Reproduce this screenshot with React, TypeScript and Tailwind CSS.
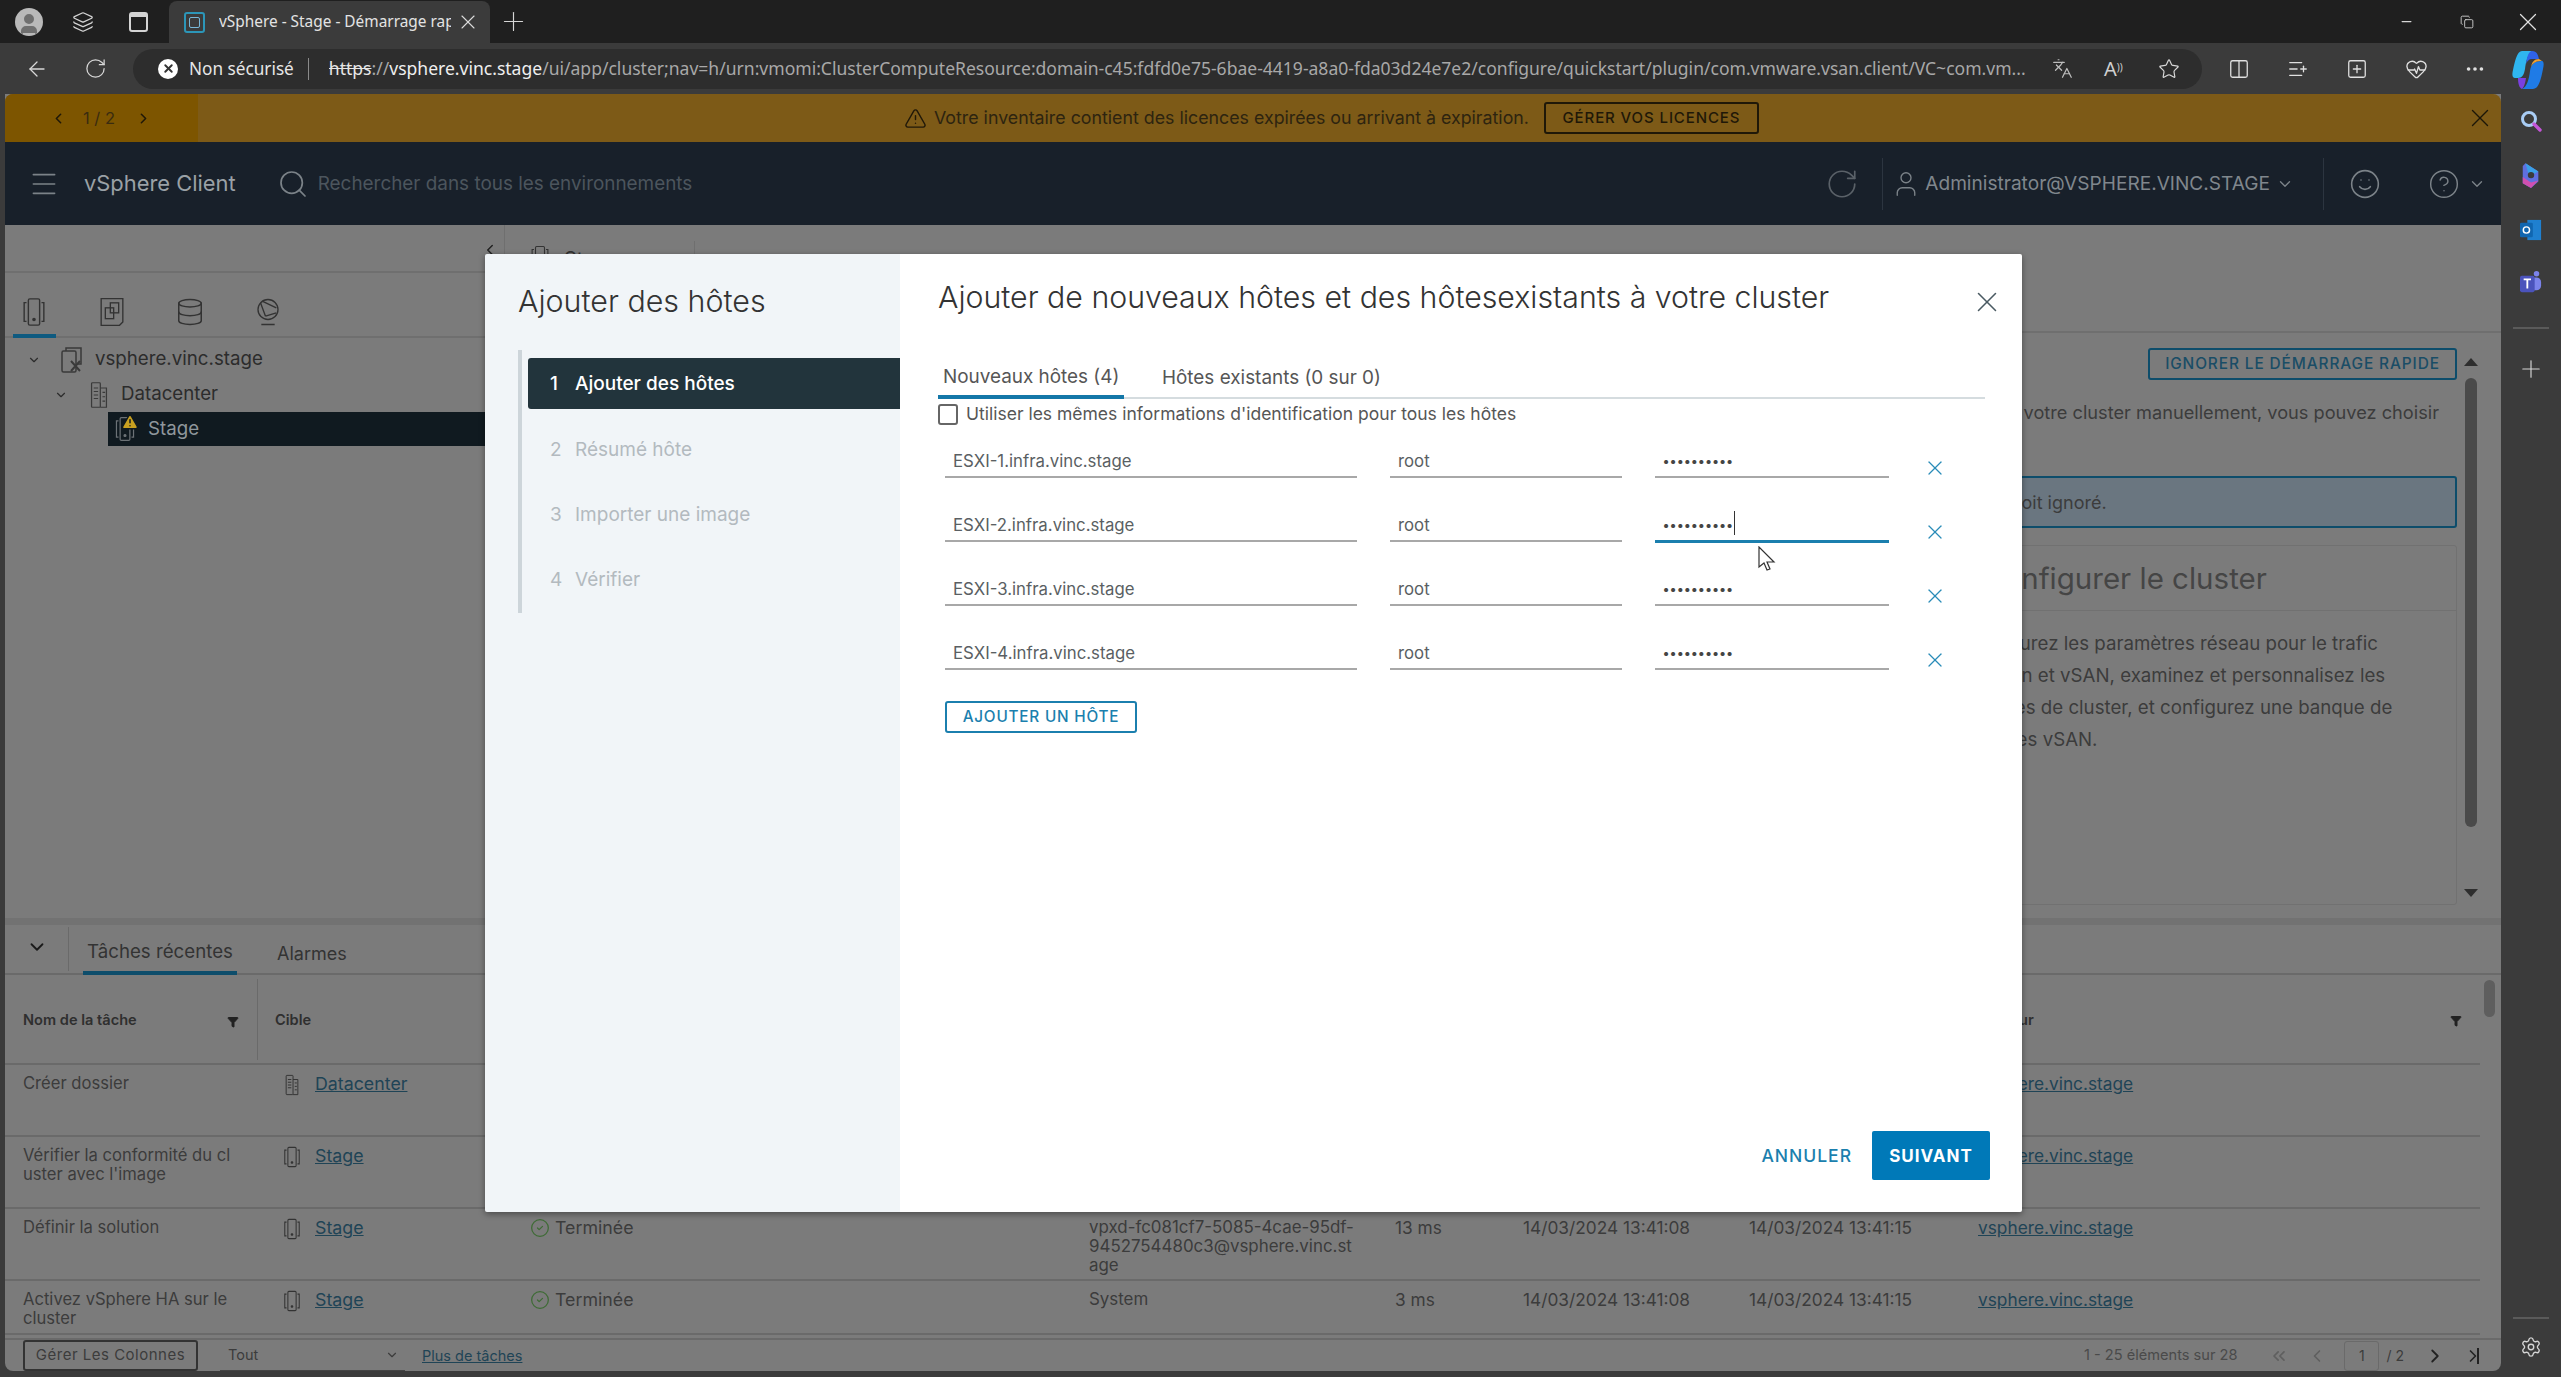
import React from "react";
import {
  ArrowLeft, RotateCw, X, Plus, Minus, Copy, Star, Columns2, ListPlus, HeartPulse, MoreHorizontal, Search,
  Menu, User, Smile, CircleHelp, ChevronDown, ChevronLeft, ChevronRight, TriangleAlert, Database,
  Settings, Filter, CircleCheck, ChevronsLeft, Languages, Layers, SquarePlus,
} from "lucide-react";

const inter = "font-['Inter','Liberation_Sans',sans-serif]";
const seg = "font-['Noto_Sans','Liberation_Sans',sans-serif]";

function ClusterIcon({ className = "" }: { className?: string }) {
  return (
    <svg viewBox="0 0 24 32" fill="none" stroke="currentColor" strokeWidth="1.5" className={className}>
      <rect x="6" y="2" width="12" height="28" rx="1.5" />
      <path d="M4 6H1.5v20H4M20 6h2.5v20H20" />
      <circle cx="12" cy="24" r="1.2" fill="currentColor" />
    </svg>
  );
}
function VCenterIcon({ className = "" }: { className?: string }) {
  return (
    <svg viewBox="0 0 24 28" fill="none" stroke="currentColor" strokeWidth="1.5" className={className}>
      <rect x="2" y="5" width="14" height="21" rx="1.5" />
      <path d="M6 5V2h15v16h-4" />
      <path d="M11 15l9 10M20 15l-9 10" strokeWidth="2" />
    </svg>
  );
}
function DcIcon({ className = "" }: { className?: string }) {
  return (
    <svg viewBox="0 0 20 32" fill="none" stroke="currentColor" strokeWidth="1.4" className={className}>
      <rect x="1.5" y="2" width="10" height="28" rx="1" />
      <path d="M11.5 8h7v22h-7M4 8h5M4 12h5M4 16h5M4 20h5M14 13h3M14 18h3M14 23h3" />
    </svg>
  );
}
function VmsIcon({ className = "" }: { className?: string }) {
  return (
    <svg viewBox="0 0 30 36" fill="none" stroke="currentColor" strokeWidth="1.6" className={className}>
      <path d="M2 2h26v28l-4 4H2z" />
      <rect x="13" y="7" width="10" height="12" />
      <rect x="7" y="13" width="10" height="13" />
    </svg>
  );
}
function NetIcon({ className = "" }: { className?: string }) {
  return (
    <svg viewBox="0 0 28 36" fill="none" stroke="currentColor" strokeWidth="1.6" className={className}>
      <circle cx="14" cy="15" r="12" />
      <path d="M5 7l6 16M11 23l13-4M7 5l17 8M10 33h9M6 33h16" />
    </svg>
  );
}
function CopilotLogo() {
  return (
    <svg viewBox="0 0 32 42" className="w-[32px] h-[42px]">
      <path d="M10 3h10c-4 3-6 10-7 18-1 6-3 9-7 9H3C0 30 0 26 1 22 3 13 5 3 10 3z" fill="#2fb6f0" />
      <path d="M20 3c5 0 6 4 7 8l-7 0c-3 0-5 2-6 5 1-8 3-13 6-13z" fill="#2f62e8" />
      <path d="M30 13c2 0 2 4 1 8-2 10-4 20-10 20H10c5-2 7-10 8-18 1-6 3-10 12-10z" fill="#1f7be6" />
      <path d="M6 30h8c-1 6-2 9-4 11-3-1-4-6-4-11z" fill="#7a3fe0" />
      <path d="M27 11l3 2c-5 0-9 1-11 6 1-5 3-8 8-8z" fill="#f0a030" />
    </svg>
  );
}
function EdgeSidebar() {
  return (
    <div className="w-[60px] flex flex-col items-center">
      <svg viewBox="0 0 22 22" fill="none" className="w-[22px] h-[22px] mt-[16px]">
        <circle cx="9" cy="9" r="6.5" stroke="#a9cdf5" strokeWidth="3" />
        <path d="M14 14l6 6" stroke="#c455d8" strokeWidth="3.4" strokeLinecap="round" />
      </svg>
      <svg viewBox="0 0 24 30" className="w-[22px] h-[28px] mt-[30px]">
        <path d="M6 1l14 9v11l-8 7-9-5V4z" fill="#5f6fe0" />
        <path d="M6 1l14 9-7 4-4-2z" fill="#3aa0e8" />
        <path d="M3 16l9 6 8-2-8 8-9-5z" fill="#d050b0" />
        <circle cx="12" cy="14" r="3.5" fill="#3b3b3b" />
      </svg>
      <svg viewBox="0 0 24 26" className="w-[22px] h-[24px] mt-[28px]">
        <rect x="8" y="2" width="15" height="22" fill="#1f80d0" />
        <rect x="0" y="5" width="14" height="16" rx="1.5" fill="#1066b0" />
        <circle cx="7" cy="13" r="3.4" fill="none" stroke="#fff" strokeWidth="1.6" />
      </svg>
      <svg viewBox="0 0 24 28" className="w-[22px] h-[26px] mt-[28px]">
        <circle cx="18" cy="4" r="3" fill="#7b83eb" />
        <rect x="11" y="8" width="12" height="14" rx="5" fill="#7b83eb" />
        <rect x="0" y="6" width="16" height="18" rx="2" fill="#4b53bc" />
        <path d="M4 10h8M8 10v10" stroke="#fff" strokeWidth="2" />
      </svg>
      <div className="w-[36px] h-[2px] bg-[#5a5a5a] mt-[31px]" />
      <Plus className="w-[28px] h-[28px] text-[#d6d6d6] mt-[26px]" strokeWidth={1} />
      <div className="flex-1" />
      <div className="w-[36px] h-[2px] bg-[#5a5a5a]" />
      <Settings className="w-[22px] h-[22px] text-[#d6d6d6] mt-[17px] mb-[19px]" strokeWidth={1.5} />
    </div>
  );
}

function BrowserChrome() {
  return (
    <>
      <div className={`h-[43px] bg-[#1f1f1f] flex items-center ${seg}`}>
        <div className="w-[28px] h-[28px] rounded-full bg-[#b9b9b9] ml-[15px] flex items-end justify-center overflow-hidden shrink-0">
          <User className="w-[24px] h-[24px] text-[#6f6f6f]" fill="#6f6f6f" />
        </div>
        <Layers className="w-[22px] h-[22px] text-[#d4d4d4] ml-[29px]" strokeWidth={1.4} />
        <div className="w-[19px] h-[20px] border-2 border-[#d4d4d4] border-t-[5px] rounded-[3px] ml-[35px]" />
        <div className="w-[321px] h-[43px] mt-[1px] ml-[21px] bg-[#3b3b3b] rounded-t-[8px] flex items-center pl-[15px]">
          <div className="w-[21px] h-[21px] rounded-[3px] border-2 border-[#2c96b8] flex items-center justify-center shrink-0">
            <div className="w-[11px] h-[11px] border border-[#79b8d8] rounded-[2px]" />
          </div>
          <span className="ml-[14px] text-[15.4px] text-[#e3e3e3] w-[232px] overflow-hidden whitespace-nowrap shrink-0">vSphere - Stage - Démarrage rapide</span>
          <X className="w-[24px] h-[24px] text-[#dcdcdc] ml-[5px] shrink-0" strokeWidth={1.1} />
        </div>
        <Plus className="w-[31px] h-[31px] text-[#d6d6d6] ml-[8px]" strokeWidth={0.9} />
        <div className="flex-1" />
        <Minus className="w-[15px] h-[15px] text-[#d6d6d6] mr-[46px]" strokeWidth={2} />
        <Copy className="w-[14px] h-[14px] text-[#d6d6d6] mr-[39px]" strokeWidth={1.5} />
        <X className="w-[30px] h-[30px] text-[#e0e0e0] mr-[18px]" strokeWidth={1} />
      </div>
      <div className={`h-[51px] bg-[#3b3b3b] flex items-center ${seg}`}>
        <ArrowLeft className="w-[24px] h-[24px] text-[#d8d8d8] ml-[25px]" strokeWidth={1.3} />
        <RotateCw className="w-[23px] h-[23px] text-[#d8d8d8] ml-[35px]" strokeWidth={1.3} />
        <div className="ml-[26px] w-[2069px] h-[40px] rounded-full bg-[#2d2d2d] flex items-center pl-[25px] pr-[22px]">
          <div className="w-[20px] h-[20px] rounded-full bg-white flex items-center justify-center shrink-0">
            <X className="w-[13px] h-[13px] text-[#333]" strokeWidth={3.5} />
          </div>
          <span className="ml-[11px] text-[17.2px] text-[#e6e6e6] whitespace-nowrap shrink-0">Non sécurisé</span>
          <div className="w-px h-[22px] bg-[#8a8a8a] ml-[14px] mr-[20px] shrink-0" />
          <div className="flex-1 min-w-0 overflow-hidden whitespace-nowrap text-[17.55px] text-[#a8a8a8]">
            <span className="text-[#e6e6e6] line-through">https</span>://<span className="text-[#efefef]">vsphere.vinc.stage</span>/ui/app/cluster;nav=h/urn:vmomi:ClusterComputeResource:domain-c45:fdfd0e75-6bae-4419-a8a0-fda03d24e7e2/configure/quickstart/plugin/com.vmware.vsan.client/VC~com.vm...
          </div>
          <Languages className="w-[21px] h-[21px] text-[#bdbdbd] ml-[16px] shrink-0" strokeWidth={1.4} />
          <span className="ml-[31px] text-[20px] text-[#d0d0d0] shrink-0 leading-none w-[22px]">A<sup className="text-[10px]">))</sup></span>
          <Star className="w-[22px] h-[22px] text-[#d8d8d8] ml-[32px] shrink-0" strokeWidth={1.3} />
        </div>
        <Columns2 className="w-[22px] h-[24px] text-[#e0e0e0] ml-[26px]" strokeWidth={1.4} />
        <ListPlus className="w-[22px] h-[24px] text-[#e0e0e0] ml-[37px]" strokeWidth={1.4} />
        <SquarePlus className="w-[22px] h-[24px] text-[#e0e0e0] ml-[37px]" strokeWidth={1.4} />
        <HeartPulse className="w-[23px] h-[24px] text-[#e0e0e0] ml-[37px]" strokeWidth={1.4} />
        <MoreHorizontal className="w-[22px] h-[22px] text-[#e0e0e0] ml-[36px]" strokeWidth={2} />
        <div className="ml-[26px]"><CopilotLogo /></div>
      </div>
    </>
  );
}

function Banner() {
  return (
    <div className={`h-[48px] bg-[#7d5a17] flex items-center rounded-tl-[8px] rounded-tr-[8px] overflow-hidden shrink-0 ${inter}`}>
      <div className="w-[193px] h-full bg-[#7d5500] flex items-center pl-[45px] text-[#1f1808] shrink-0">
        <ChevronLeft className="w-[17px] h-[17px]" strokeWidth={2.2} />
        <span className="ml-[16px] w-[34px] text-[16.5px] text-[#3a2c10] whitespace-nowrap">1 / 2</span>
        <ChevronRight className="w-[17px] h-[17px] ml-[18px]" strokeWidth={2.2} />
      </div>
      <div className="flex-1 flex items-center pl-[706px]">
        <TriangleAlert className="w-[23px] h-[23px] text-[#201808]" strokeWidth={1.5} />
        <span className="ml-[7px] text-[17.8px] text-[#2d2410] whitespace-nowrap">Votre inventaire contient des licences expirées ou arrivant à expiration.</span>
        <div className="ml-[15px] w-[215px] h-[32px] rounded-[3px] border-2 border-[#1f1808] flex items-center justify-center text-[15px] tracking-[0.9px] font-medium text-[#1f1808] whitespace-nowrap">GÉRER VOS LICENCES</div>
      </div>
      <X className="w-[30px] h-[30px] text-[#1c1608] mr-[6px]" strokeWidth={1.1} />
    </div>
  );
}

function AppHeader() {
  return (
    <div className={`h-[83px] bg-[#18202a] flex items-center text-[#7b8288] shrink-0 ${inter}`}>
      <Menu className="w-[32px] h-[32px] ml-[23px]" strokeWidth={1.2} />
      <span className="ml-[24px] text-[21.9px] text-[#9aa1a6] whitespace-nowrap">vSphere Client</span>
      <Search className="w-[32px] h-[32px] ml-[41px]" strokeWidth={1.3} />
      <span className="ml-[9px] pt-[2px] text-[18.9px] text-[#4c555d] whitespace-nowrap">Rechercher dans tous les environnements</span>
      <div className="flex-1" />
      <RotateCw className="w-[34px] h-[34px] text-[#5a6168]" strokeWidth={1.2} />
      <div className="w-px h-[52px] bg-[#2c3540] ml-[23px]" />
      <User className="w-[30px] h-[34px] ml-[8px]" strokeWidth={1.1} />
      <span className="ml-[4px] text-[19.1px] text-[#80878d] whitespace-nowrap">Administrator@VSPHERE.VINC.STAGE</span>
      <ChevronDown className="w-[18px] h-[18px] ml-[6px]" strokeWidth={1.8} />
      <div className="w-px h-[52px] bg-[#2c3540] ml-[29px]" />
      <Smile className="w-[32px] h-[32px] ml-[25px]" strokeWidth={1.2} />
      <CircleHelp className="w-[32px] h-[32px] ml-[47px]" strokeWidth={1.1} />
      <ChevronDown className="w-[18px] h-[18px] ml-[8px] mr-[15px]" strokeWidth={1.8} />
    </div>
  );
}

function LeftPanel() {
  return (
    <div className={`w-[500px] border-r border-[#6f6f6f] flex flex-col ${inter}`}>
      <div className="h-[48px] border-b-2 border-[#6f6f6f] flex justify-end items-start pr-[5px] pt-[16px]">
        <ChevronLeft className="w-[18px] h-[18px] text-[#222]" strokeWidth={2} />
      </div>
      <div className="h-[65px] border-b-2 border-[#6f6f6f] flex items-start pl-[14px] pt-[24px] gap-[48px] text-[#333]">
        <div className="relative h-[41px]">
          <ClusterIcon className="w-[30px] h-[30px]" />
          <div className="absolute left-[-6px] right-[-7px] bottom-0 h-[4px] bg-[#0e5a80]" />
        </div>
        <VmsIcon className="w-[30px] h-[30px]" />
        <Database className="w-[30px] h-[30px]" strokeWidth={1.2} />
        <NetIcon className="w-[30px] h-[30px]" />
      </div>
      <div className="pt-[4px] text-[18.7px] text-[#2c2c2c]">
        <div className="h-[35px] flex items-center">
          <ChevronDown className="w-[14px] h-[14px] ml-[22px]" />
          <VCenterIcon className="w-[24px] h-[28px] ml-[19px] text-[#3a3a3a]" />
          <span className="ml-[11px]">vsphere.vinc.stage</span>
        </div>
        <div className="h-[35px] flex items-center">
          <ChevronDown className="w-[14px] h-[14px] ml-[49px]" />
          <DcIcon className="w-[20px] h-[28px] ml-[21px] text-[#3a3a3a]" />
          <span className="ml-[12px]">Datacenter</span>
        </div>
        <div className="h-[34px] flex items-center ml-[103px] bg-[#101a20] text-[#8f979c]">
          <div className="relative ml-[7px]">
            <ClusterIcon className="w-[20px] h-[26px] text-[#6c7276]" />
            <TriangleAlert className="absolute top-[-3px] left-[6px] w-[18px] h-[18px] text-[#c8a020]" fill="#c8a020" stroke="#101a20" />
          </div>
          <span className="ml-[13px]">Stage</span>
        </div>
      </div>
    </div>
  );
}

function QuickStart() {
  return (
    <div className={`flex-1 flex flex-col min-w-0 ${inter}`}>
      <div className="h-[108px] shrink-0 border-b-2 border-[#6f6f6f] pl-[25px] pt-[22px] text-[#333] text-[20px] flex items-start">
        <ClusterIcon className="w-[20px] h-[24px] -mt-[2px]" />
        <span className="ml-[14px] leading-[24px]">Stage</span>
        <div className="w-px h-[30px] bg-[#6f6f6f] ml-[75px] -mt-[6px]" />
      </div>
      <div className="flex-1 flex justify-end min-h-0">
        <div className="flex flex-col items-end">
          <div className="mt-[15px] w-[309px] h-[32px] rounded-[3px] border-2 border-[#0d4d6b] flex items-center justify-center text-[15.4px] tracking-[0.9px] font-medium text-[#1a4d66] whitespace-nowrap">IGNORER LE DÉMARRAGE RAPIDE</div>
          <p className="mt-[20px] mr-[18px] text-[18.2px] leading-[24px] text-[#3c3c3c] whitespace-nowrap">votre cluster manuellement, vous pouvez choisir</p>
          <div className="mt-[52px] w-[520px] h-[52px] bg-[#6a7680] border-2 border-[#0d4d6b] rounded-[3px] flex items-center pl-[73px] text-[18px] text-[#3c3c3c]">soit ignoré.</div>
          <div className="mt-[17px] w-[520px] h-[360px] border border-[#717171] rounded-[3px] flex flex-col">
            <div className="h-[65px] border-b border-[#717171] flex items-center pl-[44px] text-[29.5px] text-[#454545] whitespace-nowrap">Configurer le cluster</div>
            <div className="pl-[23px] pt-[17px] text-[18.7px] leading-[32px] text-[#3c3c3c] whitespace-nowrap">
              <div>Configurez les paramètres réseau pour le trafic</div>
              <div>vMotion et vSAN, examinez et personnalisez les</div>
              <div>services de cluster, et configurez une banque de</div>
              <div>données vSAN.</div>
            </div>
          </div>
        </div>
        <div className="w-[44px] pl-[6px] pt-[25px] flex flex-col items-start">
          <div className="w-0 h-0 border-x-[7px] border-x-transparent border-b-[8px] border-b-[#2e2e2e] ml-[1px]" />
          <div className="w-[12px] h-[449px] bg-[#4a4a4a] rounded-full mt-[12px] ml-[2px]" />
          <div className="w-0 h-0 border-x-[7px] border-x-transparent border-t-[8px] border-t-[#2e2e2e] mt-[62px] ml-[1px]" />
        </div>
      </div>
    </div>
  );
}

const vpxd = "vpxd-fc081cf7-5085-4cae-95df-\n9452754480c3@vsphere.vinc.st\nage";
const taskRows = [
  { name: "Créer dossier", dc: true, target: "Datacenter", init: vpxd, q: "13 ms", h: "h-[72px]" },
  { name: "Vérifier la conformité du cl\nuster avec l'image", dc: false, target: "Stage", init: vpxd, q: "13 ms", h: "h-[72px]" },
  { name: "Définir la solution", dc: false, target: "Stage", init: vpxd, q: "13 ms", h: "h-[72px]" },
  { name: "Activez vSphere HA sur le\ncluster", dc: false, target: "Stage", init: "System", q: "3 ms", h: "h-[54px]" },
];

const cols = "grid grid-cols-[253px_254px_577px_306px_128px_226px_229px_1fr]";

function Tasks() {
  return (
    <div className={`flex-1 flex flex-col min-h-0 ${inter}`}>
      <div className="h-[7px] bg-[#727272] shrink-0" />
      <div className="h-[50px] border-b-2 border-[#6a6a6a] flex items-stretch shrink-0">
        <div className="w-[64px] border-r border-[#6a6a6a] my-[2px] flex items-center justify-center">
          <ChevronDown className="w-[22px] h-[22px] text-[#1a1a1a] -mt-[4px]" strokeWidth={2} />
        </div>
        <div className="ml-[14px] w-[154px] border-b-4 border-[#0d4d6b] -mb-[2px] flex items-center justify-center pt-[9px] text-[18.7px] text-[#333] whitespace-nowrap">Tâches récentes</div>
        <div className="ml-[40px] flex items-center pt-[8px] text-[18px] text-[#333]">Alarmes</div>
      </div>
      <div className="flex-1 flex min-h-0">
        <div className="flex-1 min-w-0 flex flex-col">
          <div className={`${cols} h-[90px] border-b-2 border-[#6a6a6a] text-[14.6px] font-semibold text-[#2f2f2f] items-center shrink-0`}>
            <div className="pl-[18px] flex items-center justify-between pr-[18px] border-r border-[#6a6a6a] h-[81px] pt-[3px]">
              <span>Nom de la tâche</span>
              <Filter className="w-[12px] h-[12px] text-[#222] mt-[2px]" fill="#222" />
            </div>
            <div className="pl-[17px] pt-[3px]">Cible</div>
            <div className="pl-[16px] pt-[3px]">État</div>
            <div className="pt-[3px]">Initiateur</div>
            <div className="pt-[3px]">Mise</div>
            <div className="pt-[3px]">Heure de début</div>
            <div className="pt-[3px]">Heure de fin</div>
            <div className="flex justify-between items-center pr-[18px] pt-[3px]">
              <span>Serveur</span>
              <Filter className="w-[12px] h-[12px] text-[#222] mt-[2px]" fill="#222" />
            </div>
          </div>
          {taskRows.map((r, i) => (
            <div key={i} className={`${cols} ${r.h} border-b-2 border-[#6a6a6a] text-[17.3px] leading-[19px] text-[#3c3c3c] pt-[9px] shrink-0`}>
              <div className="pl-[18px] whitespace-pre-line text-[16.6px]">{r.name}</div>
              <div className="pl-[24px] flex items-start">
                {r.dc ? <DcIcon className="w-[20px] h-[22px] text-[#333]" /> : <ClusterIcon className="w-[20px] h-[22px] text-[#333]" />}
                <span className="ml-[13px] underline text-[#1f4456] text-[17.8px]">{r.target}</span>
              </div>
              <div className="pl-[18px] flex items-start text-[17.8px]">
                <CircleCheck className="w-[20px] h-[20px] text-[#3e6b35]" strokeWidth={1.5} />
                <span className="ml-[5px]">Terminée</span>
              </div>
              <div className="whitespace-pre-line text-[16.9px]">{r.init}</div>
              <div>{r.q}</div>
              <div>14/03/2024 13:41:08</div>
              <div>14/03/2024 13:41:15</div>
              <div className="underline text-[#1f4456]">vsphere.vinc.stage</div>
            </div>
          ))}
        </div>
        <div className="w-[21px] pl-[4px] pt-[5px]">
          <div className="w-[11px] h-[37px] bg-[#5e5e5e] rounded-full" />
        </div>
      </div>
      <div className="h-[33px] border-t-2 border-[#6a6a6a] flex items-center shrink-0 text-[#3c3c3c]">
        <div className="ml-[18px] w-[175px] h-[31px] border-2 border-[#333] rounded-[3px] flex items-center justify-center text-[15px] tracking-[0.5px] whitespace-nowrap">Gérer Les Colonnes</div>
        <div className="ml-[22px] w-[185px] h-[31px] border-b border-[#444] flex items-center justify-between pl-[8px] pr-[6px] text-[14.5px]">
          <span>Tout</span>
          <ChevronDown className="w-[14px] h-[14px]" />
        </div>
        <span className="ml-[17px] underline text-[14.5px] text-[#1f4456] whitespace-nowrap">Plus de tâches</span>
        <div className="flex-1" />
        <span className="text-[14.6px] text-[#4a4a4a] whitespace-nowrap">1 - 25 éléments sur 28</span>
        <ChevronsLeft className="w-[20px] h-[20px] ml-[32px] text-[#5f5f5f]" />
        <ChevronLeft className="w-[20px] h-[20px] ml-[18px] text-[#5f5f5f]" />
        <div className="ml-[17px] w-[35px] h-[30px] border border-[#6a6a6a] rounded-[3px] flex items-center justify-center text-[14px]">1</div>
        <span className="ml-[7px] text-[14px] whitespace-nowrap">/ 2</span>
        <ChevronRight className="w-[22px] h-[22px] ml-[20px] text-[#222]" />
        <span className="ml-[17px] mr-[22px] flex items-center"><ChevronRight className="w-[20px] h-[20px] text-[#222] -mr-[6px]" /><span className="w-[2px] h-[16px] bg-[#222]" /></span>
      </div>
    </div>
  );
}

function HostRow({ host, active }: { host: string; active?: boolean }) {
  return (
    <div className="ml-[7px] flex items-start h-[33px] mb-[31px] text-[16.8px] text-[#5a5f63]">
      <div className="w-[412px] h-[33px] border-b-2 border-[#a8a8a8] pl-[8px] leading-[32px]">{host}</div>
      <div className="w-[232px] h-[33px] ml-[33px] border-b-2 border-[#a8a8a8] pl-[8px] leading-[32px]">root</div>
      <div className={`w-[234px] ml-[33px] pl-[8px] leading-[32px] tracking-[0.9px] text-[13px] text-[#444] flex ${active ? "h-[34px] border-b-[3px] border-[#1b7fae]" : "h-[33px] border-b-2 border-[#a8a8a8]"}`}>
        <span className="font-bold">••••••••••</span>
        {active && <span className="w-px h-[24px] bg-[#333] mt-[2px]" />}
      </div>
      <X className="w-[24px] h-[24px] ml-[34px] mt-[11px] text-[#2a8cb8]" strokeWidth={1.3} />
    </div>
  );
}

function Modal() {
  const steps = ["Résumé hôte", "Importer une image", "Vérifier"];
  return (
    <div className={`absolute left-[485px] top-[254px] w-[1537px] h-[958px] flex rounded-[2px] shadow-[0_2px_6px_rgba(0,0,0,0.4)] overflow-hidden ${inter}`}>
      <div className="w-[415px] bg-[#f1f5f8] pl-[33px] pt-[27px] flex flex-col">
        <h2 className="h-[40px] leading-[40px] text-[30.4px] font-light text-[#333] whitespace-nowrap">Ajouter des hôtes</h2>
        <div className="mt-[29px] border-l-4 border-[#cdd5da] pl-[6px] pt-[8px] pb-[9px]">
          <div className="h-[51px] mb-[14px] bg-[#22343c] rounded-l-[3px] flex items-center pl-[22px] pt-[1px] text-[19px] font-medium text-white">
            <span className="w-[25px]">1</span><span>Ajouter des hôtes</span>
          </div>
          {steps.map((s, i) => (
            <div key={s} className={`h-[51px] flex items-center pl-[22px] pt-[3px] text-[19px] text-[#b3babf] ${i < 2 ? "mb-[14px]" : ""}`}>
              <span className="w-[25px]">{i + 2}</span><span>{s}</span>
            </div>
          ))}
        </div>
      </div>
      <div className="flex-1 bg-white pl-[38px] pr-[32px] pt-[23px] pb-[32px] flex flex-col relative">
        <div className="flex items-start justify-between h-[42px]">
          <h1 className="leading-[40px] text-[30.3px] font-light text-[#333] whitespace-nowrap">Ajouter de nouveaux hôtes et des hôtesexistants à votre cluster</h1>
          <X className="w-[34px] h-[34px] text-[#4a5a62] mt-[8px] -mr-[14px]" strokeWidth={1.1} />
        </div>
        <div className="mt-[37px] w-[1047px] h-[43px] border-b-2 border-[#d5dcdf] flex items-stretch text-[18.9px] text-[#565656]">
          <div className="w-[186px] border-b-4 border-[#1477a8] -mb-[2px] flex items-center pl-[5px] pt-[4px] whitespace-nowrap">Nouveaux hôtes (4)</div>
          <div className="ml-[38px] flex items-center pt-[3px] whitespace-nowrap">Hôtes existants (0 sur 0)</div>
        </div>
        <div className="mt-[5px] h-[21px] flex items-center">
          <div className="w-[20px] h-[21px] border-2 border-[#666] rounded-[3px]" />
          <span className="ml-[8px] text-[17.5px] text-[#565656] whitespace-nowrap">Utiliser les mêmes informations d'identification pour tous les hôtes</span>
        </div>
        <div className="mt-[20px]">
          <HostRow host="ESXI-1.infra.vinc.stage" />
          <HostRow host="ESXI-2.infra.vinc.stage" active />
          <HostRow host="ESXI-3.infra.vinc.stage" />
          <HostRow host="ESXI-4.infra.vinc.stage" />
        </div>
        <div className="ml-[7px] w-[192px] h-[32px] border-2 border-[#1b7fae] rounded-[3px] flex items-center justify-center text-[15.3px] tracking-[0.8px] font-medium text-[#1b7fae] whitespace-nowrap">AJOUTER UN HÔTE</div>
        <div className="mt-auto flex items-center justify-end">
          <span className="text-[17.5px] tracking-[1px] font-medium text-[#1b7fae] pt-[2px]">ANNULER</span>
          <div className="ml-[20px] w-[118px] h-[49px] bg-[#0079b8] rounded-[2px] flex items-center justify-center pt-[2px] text-[17px] tracking-[1px] font-bold text-white">SUIVANT</div>
        </div>
      </div>
    </div>
  );
}

export default function App() {
  return (
    <div className="relative w-[2561px] h-[1377px] overflow-hidden bg-[#3b3b3b] flex flex-col">
      <BrowserChrome />
      <div className="flex flex-1 min-h-0">
        <div className="ml-[5px] w-[2496px] mb-[6px] flex flex-col rounded-b-[8px] overflow-hidden bg-[#7b7b7b]">
          <Banner />
          <AppHeader />
          <div className="flex h-[693px] shrink-0">
            <LeftPanel />
            <QuickStart />
          </div>
          <Tasks />
        </div>
        <EdgeSidebar />
      </div>
      <Modal />
      <svg viewBox="0 0 18 26" className="absolute left-[1758px] top-[546px] w-[18px] h-[26px]">
        <path d="M1 1v20l5-4 3 7 3-1-3-7h7z" fill="#fff" stroke="#333" strokeWidth="1.2" />
      </svg>
    </div>
  );
}
